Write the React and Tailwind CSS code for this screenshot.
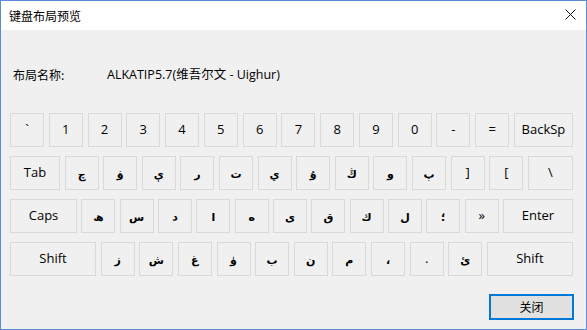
import React from "react";

const rows = [
  { keys: ["`", "1", "2", "3", "4", "5", "6", "7", "8", "9", "0", "-", "=", { label: "BackSp", w: "w-[59px]" }] },
  { keys: [{ label: "Tab", w: "w-[50px]" }, "چ", "ۋ", "ې", "ر", "ت", "ي", "ۇ", "ڭ", "و", "پ", "]", "[", { label: "\\", w: "w-[45px]" }] },
  { keys: [{ label: "Caps", w: "w-[67px]" }, "ھ", "س", "د", "ا", "ە", "ى", "ق", "ك", "ل", "؛", "»", { label: "Enter", w: "w-[70px]" }] },
  { keys: [{ label: "Shift", w: "w-[86px]" }, "ز", "ش", "غ", "ۈ", "ب", "ن", "م", "،", ".", "ئ", { label: "Shift", w: "w-[86px]" }] },
];

const isArabic = (s) => /[\u0600-\u06ff]/.test(s);

function Key({ k }) {
  const label = typeof k === "string" ? k : k.label;
  const w = typeof k === "string" ? "w-[34px]" : k.w;
  return (
    <div
      className={`${w} h-[34px] shrink-0 border border-[#d9d9d9] bg-[#f0f0f0] flex items-center justify-center text-black ${
        isArabic(label) ? "text-[11px] font-bold pt-[4px] font-['DejaVu_Sans',sans-serif]" : "text-[13px]"
      }`}
    >
      {label}
    </div>
  );
}

export default function App() {
  return (
    <div className="w-[587px] h-[330px] border border-[#5a8cd8] bg-[#f0f0f0] flex flex-col font-['Open_Sans','Noto_Sans_CJK_SC',sans-serif] text-black overflow-hidden">
      {/* title bar */}
      <div className="h-[29px] bg-white flex items-center justify-between pl-[8px] pr-[10px] shrink-0">
        <span className="text-[12px] font-['Noto_Sans_CJK_SC',sans-serif]">键盘布局预览</span>
        <svg width="11" height="11" viewBox="0 0 11 11" className="mt-[-2px]">
          <path d="M0.5 0.5 L10.5 10.5 M10.5 0.5 L0.5 10.5" stroke="#111" strokeWidth="1" />
        </svg>
      </div>

      {/* layout name */}
      <div className="flex items-center h-[18px] mt-[36px] text-[12.5px]">
        <span className="pl-[12px] w-[106px] font-['Noto_Sans_CJK_SC',sans-serif] text-[12px]">布局名称:</span>
        <span>ALKATIP5.7(维吾尔文 - Uighur)</span>
      </div>

      {/* keyboard */}
      <div className="flex flex-col gap-[9px] mt-[29px] pl-[9px] w-[572px]">
        {rows.map((row, i) => (
          <div key={i} className="flex justify-between w-[563px]">
            {row.keys.map((k, j) => (
              <Key key={j} k={k} />
            ))}
          </div>
        ))}
      </div>

      {/* close button */}
      <div className="flex justify-end pr-[12px] mt-[18px]">
        <button className="w-[85px] h-[26px] border-2 border-[#0078d7] bg-[#e1e1e1] text-[12px] font-['Noto_Sans_CJK_SC',sans-serif] flex items-center justify-center">
          关闭
        </button>
      </div>
    </div>
  );
}
